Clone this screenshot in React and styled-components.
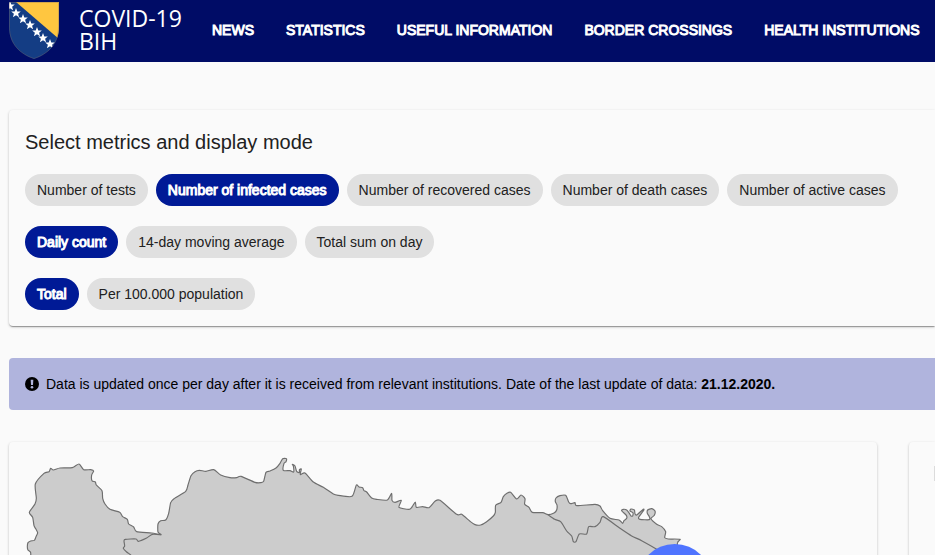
import React, { useState } from "react";
import styled, { createGlobalStyle } from "styled-components";

const GlobalStyle = createGlobalStyle`
  *, *::before, *::after { box-sizing: border-box; }
  body {
    margin: 0;
    overflow: hidden;
    background: #fafafa;
    color: #212121;
    font-family: "Liberation Sans", Arial, Helvetica, sans-serif;
    font-size: 14px;
  }
`;

const Page = styled.div`
  display: flex;
  flex-direction: column;
  height: 100vh;
  overflow: hidden;
`;

const Header = styled.header`
  display: flex;
  align-items: center;
  flex: none;
  height: 62px;
  padding: 0 0 2px 9px;
  background: #000c66;
  color: #fff;
`;

const Brand = styled.a`
  display: flex;
  align-items: center;
  gap: 20px;
  color: inherit;
  text-decoration: none;
`;

const Shield = styled.svg`
  display: block;
  width: 50px;
  height: 58px;
`;

const BrandName = styled.span`
  width: 113px;
  font-family: "Open Sans", "Noto Sans", sans-serif;
  font-size: 23px;
  line-height: 23px;
`;

const Nav = styled.nav`
  display: flex;
  gap: 32px;
  margin-left: 20px;
`;

const NavLink = styled.a`
  color: #fff;
  font-size: 14px;
  line-height: 20px;
  -webkit-text-stroke: 1px #fff;
  text-decoration: none;
  text-transform: uppercase;
  white-space: nowrap;
`;

const Main = styled.main`
  display: flex;
  flex-direction: column;
  gap: 32px;
  padding: 48px 0 0 9px;
`;

const Card = styled.section`
  border-radius: ${(p) => (p.$bleed ? "4px 0 0 4px" : "4px")};
  background: #fafafa;
  box-shadow: 0 2px 1px -1px rgba(0, 0, 0, 0.2), 0 1px 1px rgba(0, 0, 0, 0.14),
    0 1px 3px rgba(0, 0, 0, 0.2);
`;

const Filters = styled(Card)`
  display: flex;
  flex-direction: column;
  gap: 20px;
  padding: 16px;
`;

const Title = styled.h2`
  margin: 0 0 -4px;
  font-size: 20px;
  font-weight: 400;
  line-height: 32px;
`;

const ChipRow = styled.div`
  display: flex;
  gap: 8px;
`;

const Chip = styled.button`
  height: 32px;
  padding: 0 12px;
  border: 0;
  border-radius: 16px;
  background: ${(p) => (p.$active ? "#001a96" : "#e0e0e0")};
  color: ${(p) => (p.$active ? "#fff" : "#212121")};
  -webkit-text-stroke: ${(p) => (p.$active ? "1px #fff" : "0")};
  font: inherit;
  white-space: nowrap;
  cursor: pointer;
`;

const Notice = styled.p`
  display: flex;
  align-items: center;
  gap: 7px;
  margin: 0;
  padding: 16px;
  border-radius: 4px 0 0 4px;
  background: #b0b4dd;
  color: #000;
  line-height: 20px;
`;

const NoticeIcon = styled.svg`
  flex: none;
  width: 14px;
  height: 14px;
`;

const Panels = styled.div`
  display: grid;
  grid-template-columns: minmax(0, 1fr) 26px;
  gap: 32px;
`;

const RegionMap = styled.svg`
  display: block;
  width: 100%;
  height: auto;
`;

const SidePanel = styled(Card)`
  padding: 24px 0 0 25px;
`;

const SideField = styled.div`
  height: 15px;
  background: #dcdcdc;
`;

const links = ["News", "Statistics", "Useful information", "Border crossings", "Health institutions"];

const groups = [
  {
    label: "Metric",
    selected: 1,
    options: [
      "Number of tests",
      "Number of infected cases",
      "Number of recovered cases",
      "Number of death cases",
      "Number of active cases",
    ],
  },
  { label: "Aggregation", selected: 0, options: ["Daily count", "14-day moving average", "Total sum on day"] },
  { label: "Scale", selected: 0, options: ["Total", "Per 100.000 population"] },
];

const northWest = [
  [92, 400], [92, 368], [84, 360], [82, 350], [84, 338], [92, 333], [103, 331], [108, 320], [113, 308],
  [108, 298], [102, 287], [98, 262], [88, 247], [105, 222], [109, 205], [106, 162], [132, 130], [147, 125],
  [152, 115], [160, 120], [180, 114], [217, 113], [237, 102], [251, 119], [272, 119], [281, 123], [275, 135],
  [276, 152], [286, 156], [289, 165], [306, 182], [308, 205], [315, 222], [330, 238], [359, 247], [368, 260],
  [382, 268], [386, 282], [401, 291], [410, 305], [455, 309], [483, 314], [474, 306], [474, 282], [482, 272],
  [497, 270], [506, 250], [512, 218], [522, 206], [557, 184], [564, 165], [573, 137], [585, 125], [598, 121],
  [618, 124], [641, 119], [662, 135], [690, 143],
];

const north = [
  [710, 143], [723, 139], [765, 157], [782, 158], [791, 154], [798, 127], [810, 123], [828, 114], [840, 100],
  [848, 86], [859, 86], [858, 95], [852, 100], [850, 121], [870, 122], [881, 126], [880, 108], [877, 103],
  [885, 108], [890, 124], [899, 128], [898, 120], [904, 117], [901, 134], [915, 129], [940, 156], [970, 172],
  [1000, 192], [1015, 196], [1056, 199], [1069, 165], [1077, 171], [1088, 173], [1092, 182], [1100, 186],
  [1115, 204], [1130, 208], [1162, 210], [1175, 190], [1176, 211], [1185, 217], [1204, 211], [1197, 232],
  [1227, 238], [1236, 231], [1246, 216], [1249, 232], [1268, 230], [1287, 233], [1305, 214], [1320, 211],
  [1370, 253], [1385, 253], [1410, 274], [1425, 284], [1442, 285], [1460, 275], [1480, 258], [1486, 247],
  [1487, 226], [1503, 217], [1510, 200], [1522, 189], [1532, 187], [1550, 207], [1563, 195], [1575, 206],
  [1574, 223], [1587, 232], [1597, 247], [1628, 248], [1644, 254],
];

const northEast = [
  [1662, 249], [1670, 240], [1671, 225], [1666, 215], [1668, 204], [1680, 197], [1697, 196], [1706, 216],
  [1712, 221], [1725, 218], [1730, 227], [1785, 223], [1800, 228], [1808, 242], [1830, 265], [1857, 270],
  [1868, 280], [1872, 272], [1880, 265], [1879, 256], [1865, 242], [1870, 238], [1880, 240], [1888, 250],
  [1893, 258], [1898, 258], [1899, 248], [1890, 243], [1893, 237], [1903, 240], [1905, 251], [1910, 255],
  [1930, 238], [1931, 241], [1916, 262], [1920, 268], [1948, 269], [1948, 260], [1942, 250], [1943, 240],
  [1955, 236], [1965, 243], [1963, 256], [1953, 266], [1970, 283], [1985, 290], [1997, 305], [1994, 323],
  [2005, 327], [2040, 328], [2032, 341], [2040, 400],
];

const westBorder = [
  [483, 314], [457, 313], [440, 324], [415, 334], [408, 327], [376, 328], [372, 333], [374, 348], [370, 355],
  [380, 366], [392, 375], [410, 400],
];

const eastBorder = [
  [1644, 254], [1664, 268], [1682, 275], [1700, 303], [1715, 318], [1720, 335], [1728, 335], [1738, 312],
  [1760, 312], [1766, 290], [1785, 290], [1800, 277], [1810, 260], [1860, 295], [1895, 318], [1925, 332],
  [1970, 358], [2000, 380],
];

/* Joins the points with a lightly rounded curve. */
function curve(points) {
  const k = 0.12;
  return points.reduce((d, p, i) => {
    if (i === 0) return `M${p[0]} ${p[1]}`;
    const a = points[i - 1];
    const before = points[i - 2] || a;
    const after = points[i + 1] || p;
    const c1 = [a[0] + (p[0] - before[0]) * k, a[1] + (p[1] - before[1]) * k];
    const c2 = [p[0] - (after[0] - a[0]) * k, p[1] - (after[1] - a[1]) * k];
    return `${d}C${c1.join(" ")} ${c2.join(" ")} ${p.join(" ")}`;
  }, "");
}

const starCentres = [[1, 5], [7, 12], [14, 18], [21, 24], [28, 31], [34, 37], [41, 43]];
const starPath = "M0-5 1.300-1.500 4.800-1.500 2.100.8 3.100 4.300 0 2.200-3.100 4.300-2.100.8-4.800-1.500-1.300-1.500Z";

function CoatOfArms() {
  return (
    <Shield viewBox="0 0 50 58" aria-hidden="true">
      <clipPath id="shield">
        <path d="M0 1H50V26C50 43 39 53 25 58 11 53 0 43 0 26Z" />
      </clipPath>
      <g clipPath="url(#shield)">
        <path d="M0 0H50V58H0Z" fill="#143d84" />
        <path d="M7 1H50V38Z" fill="#ffc640" />
        <g fill="#fff">
          {starCentres.map(([x, y]) => (
            <path key={x} d={starPath} transform={`translate(${x} ${y})`} />
          ))}
        </g>
      </g>
      <path
        d="M.5 1.500H49.500V26C49.500 43 39 53 25 57.500 11 53 .5 43 .5 26Z"
        fill="none"
        stroke="#806b63"
        strokeOpacity=".35"
      />
    </Shield>
  );
}

function ChipGroup({ group }) {
  const [selected, setSelected] = useState(group.selected);
  return (
    <ChipRow role="group" aria-label={group.label}>
      {group.options.map((option, i) => (
        <Chip
          key={option}
          type="button"
          $active={i === selected}
          aria-pressed={i === selected}
          onClick={() => setSelected(i)}
        >
          {option}
        </Chip>
      ))}
    </ChipRow>
  );
}

export default function App() {
  return (
    <Page>
      <GlobalStyle />
      <Header>
        <Brand href="#home">
          <CoatOfArms />
          <BrandName>COVID-19 BIH</BrandName>
        </Brand>
        <Nav>
          {links.map((link) => (
            <NavLink key={link} href={`#${link.toLowerCase().replace(" ", "-")}`}>
              {link}
            </NavLink>
          ))}
        </Nav>
      </Header>
      <Main>
        <Filters $bleed>
          <Title>Select metrics and display mode</Title>
          {groups.map((group) => (
            <ChipGroup key={group.label} group={group} />
          ))}
        </Filters>
        <Notice>
          <NoticeIcon viewBox="0 0 14 14" aria-hidden="true">
            <circle cx="7" cy="7" r="7" fill="#000" />
            <path d="M5.700 2.800H8.300L8 8H6Z" fill="#b0b4dd" />
            <circle cx="7" cy="10.200" r="1.300" fill="#b0b4dd" />
          </NoticeIcon>
          <span>
            Data is updated once per day after it is received from relevant institutions. Date of the last update of
            data: <b>21.12.2020.</b>
          </span>
        </Notice>
        <Panels>
          <Card>
            <RegionMap viewBox="27 36 2604 354" role="img" aria-label="Map of infected cases">
              <g stroke="#6e6e6e" strokeWidth="3.500" strokeLinejoin="round">
                <path d={curve([...northWest, ...north, ...northEast])} fill="#ccc" />
                <path d={curve(westBorder)} fill="none" />
                <path d={curve(eastBorder)} fill="none" />
              </g>
              <circle cx="2024" cy="454" r="112" fill="#4f74ff" />
            </RegionMap>
          </Card>
          <SidePanel $bleed>
            <SideField />
          </SidePanel>
        </Panels>
      </Main>
    </Page>
  );
}
